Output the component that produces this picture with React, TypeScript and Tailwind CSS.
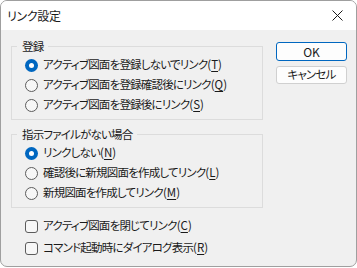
import React from 'react';

const font = { fontFamily: '"Noto Sans CJK JP", "Noto Sans", sans-serif', fontFeatureSettings: '"palt"' } as React.CSSProperties;

function Radio({ checked }: { checked?: boolean }) {
    return checked ? (
        <span className="flex h-[13px] w-[13px] shrink-0 items-center justify-center rounded-full bg-[#0067c0]">
            <span className="h-[5px] w-[5px] rounded-full bg-white" />
        </span>
    ) : (
        <span className="h-[13px] w-[13px] shrink-0 rounded-full border border-[#5c5c5c] bg-[#f7f7f7]" />
    );
}

function Label({ text, mn }: { text: string; mn: string }) {
    return (
        <span className="whitespace-nowrap">
            {text}
            <span className="tracking-[0px]">
                (<span className="underline underline-offset-2">{mn}</span>)
            </span>
        </span>
    );
}

function RadioRow({ text, mn, checked }: { text: string; mn: string; checked?: boolean }) {
    return (
        <div className="flex h-[20px] items-center gap-[5px] pl-[13px]">
            <Radio checked={checked} />
            <Label text={text} mn={mn} />
        </div>
    );
}

function Group({ title, children }: { title: string; children: React.ReactNode }) {
    return (
        <div className="relative border border-[#dcdcdc] pb-[4px] pt-[8px]">
            <span className="absolute -top-[10px] left-[5px] bg-[#f0f0f0] px-[5px] leading-[18px]">{title}</span>
            {children}
        </div>
    );
}

function CheckRow({ text, mn }: { text: string; mn: string }) {
    return (
        <div className="flex h-[22px] items-center gap-[5px] pl-[14px]">
            <span className="h-[13px] w-[13px] shrink-0 rounded-[3px] border border-[#5c5c5c] bg-[#f7f7f7]" />
            <Label text={text} mn={mn} />
        </div>
    );
}

export default function App() {
    return (
        <div className="h-[268px] w-[357px] bg-white text-[11.5px] tracking-[-0.8px] text-[#1a1a1a]" style={font}>
            <div className="flex h-[267px] w-[357px] flex-col overflow-hidden rounded-[7px] border border-[#9f9f9f] bg-[#f0f0f0]">
                {/* Title bar */}
                <div className="flex h-[29px] shrink-0 items-center justify-between bg-white pl-[6px] pr-[10px]">
                    <span className="text-[12px] tracking-[-0.3px]">リンク設定</span>
                    <svg width="11" height="11" viewBox="0 0 11 11" className="mr-[3px]">
                        <path d="M0.5 0.5 L10.5 10.5 M10.5 0.5 L0.5 10.5" stroke="#1a1a1a" strokeWidth="1" />
                    </svg>
                </div>

                {/* Body */}
                <div className="flex flex-1 pl-[10px] pr-[9px] pt-[16px]">
                    <div className="flex w-[252px] flex-col">
                        <Group title="登録">
                            <RadioRow text="アクティブ図面を登録しないでリンク" mn="T" checked />
                            <RadioRow text="アクティブ図面を登録確認後にリンク" mn="Q" />
                            <RadioRow text="アクティブ図面を登録後にリンク" mn="S" />
                        </Group>
                        <div className="h-[14px] shrink-0" />
                        <Group title="指示ファイルがない場合">
                            <RadioRow text="リンクしない" mn="N" checked />
                            <RadioRow text="確認後に新規図面を作成してリンク" mn="L" />
                            <RadioRow text="新規図面を作成してリンク" mn="M" />
                        </Group>
                        <div className="mt-[7px] flex flex-col">
                            <CheckRow text="アクティブ図面を閉じてリンク" mn="C" />
                            <CheckRow text="コマンド起動時にダイアログ表示" mn="R" />
                        </div>
                    </div>
                    <div className="ml-auto flex w-[71px] flex-col gap-[5px]">
                        <button className="-mt-[4px] h-[19px] w-[71px] rounded-[3px] border border-[#0067c0] bg-[#fdfdfd] text-[12px] font-normal leading-none tracking-normal">OK</button>
                        <button className="h-[18px] w-[71px] rounded-[3px] border border-[#d0d0d0] bg-[#fdfdfd] leading-none">キャンセル</button>
                    </div>
                </div>
            </div>
        </div>
    );
}
